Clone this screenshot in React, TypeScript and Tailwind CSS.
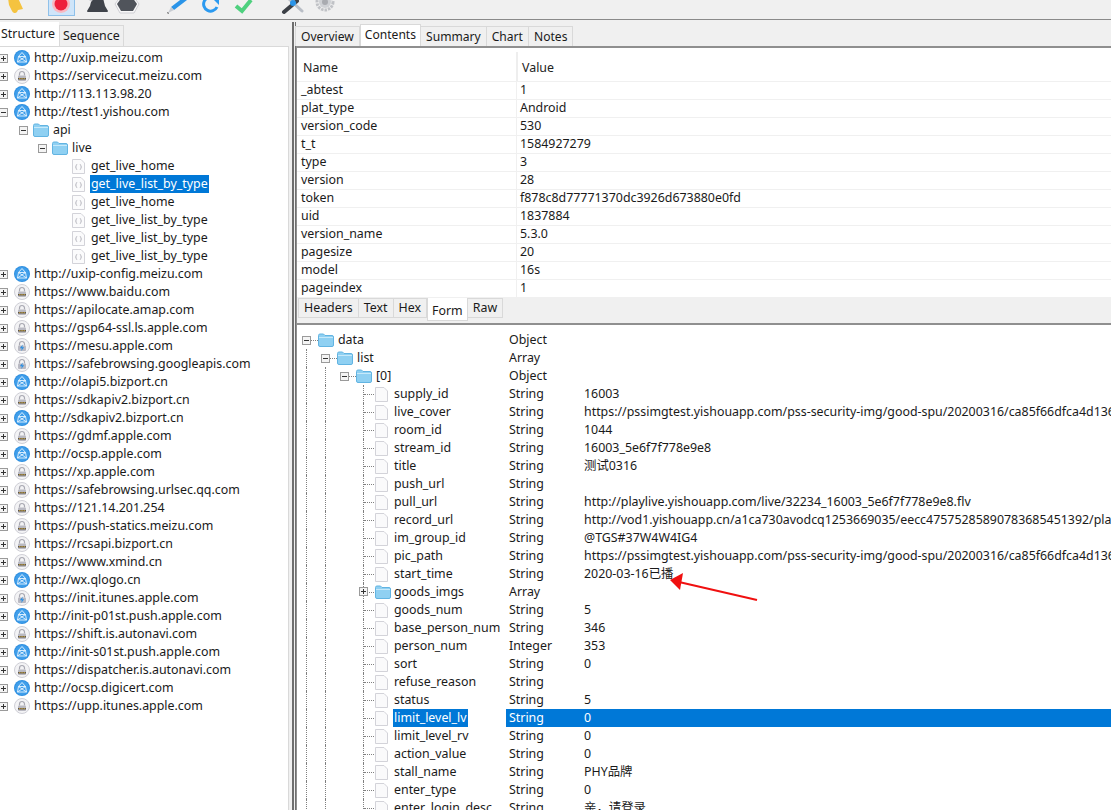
import type { ReactNode } from "react";

type HostKind = "globe" | "lock" | "bolt";

type Host = { url: string; kind: HostKind };

const hostsTop: Host[] = [
  { url: "http://uxip.meizu.com", kind: "globe" },
  { url: "https://servicecut.meizu.com", kind: "lock" },
  { url: "http://113.113.98.20", kind: "globe" },
];

const hostsBottom: Host[] = [
  { url: "http://uxip-config.meizu.com", kind: "globe" },
  { url: "https://www.baidu.com", kind: "lock" },
  { url: "https://apilocate.amap.com", kind: "lock" },
  { url: "https://gsp64-ssl.ls.apple.com", kind: "lock" },
  { url: "https://mesu.apple.com", kind: "bolt" },
  { url: "https://safebrowsing.googleapis.com", kind: "bolt" },
  { url: "http://olapi5.bizport.cn", kind: "globe" },
  { url: "https://sdkapiv2.bizport.cn", kind: "lock" },
  { url: "http://sdkapiv2.bizport.cn", kind: "globe" },
  { url: "https://gdmf.apple.com", kind: "lock" },
  { url: "http://ocsp.apple.com", kind: "globe" },
  { url: "https://xp.apple.com", kind: "lock" },
  { url: "https://safebrowsing.urlsec.qq.com", kind: "lock" },
  { url: "https://121.14.201.254", kind: "lock" },
  { url: "https://push-statics.meizu.com", kind: "lock" },
  { url: "https://rcsapi.bizport.cn", kind: "lock" },
  { url: "https://www.xmind.cn", kind: "lock" },
  { url: "http://wx.qlogo.cn", kind: "globe" },
  { url: "https://init.itunes.apple.com", kind: "bolt" },
  { url: "http://init-p01st.push.apple.com", kind: "globe" },
  { url: "https://shift.is.autonavi.com", kind: "lock" },
  { url: "http://init-s01st.push.apple.com", kind: "globe" },
  { url: "https://dispatcher.is.autonavi.com", kind: "lock" },
  { url: "http://ocsp.digicert.com", kind: "globe" },
  { url: "https://upp.itunes.apple.com", kind: "lock" },
];

const liveCalls = [
  "get_live_home",
  "get_live_list_by_type",
  "get_live_home",
  "get_live_list_by_type",
  "get_live_list_by_type",
  "get_live_list_by_type",
];

const contents = [
  ["_abtest", "1"],
  ["plat_type", "Android"],
  ["version_code", "530"],
  ["t_t", "1584927279"],
  ["type", "3"],
  ["version", "28"],
  ["token", "f878c8d77771370dc3926d673880e0fd"],
  ["uid", "1837884"],
  ["version_name", "5.3.0"],
  ["pagesize", "20"],
  ["model", "16s"],
  ["pageindex", "1"],
];

const formRows = [
  ["supply_id", "String", "16003"],
  ["live_cover", "String", "https://pssimgtest.yishouapp.com/pss-security-img/good-spu/20200316/ca85f66dfca4d136"],
  ["room_id", "String", "1044"],
  ["stream_id", "String", "16003_5e6f7f778e9e8"],
  ["title", "String", "测试0316"],
  ["push_url", "String", ""],
  ["pull_url", "String", "http://playlive.yishouapp.com/live/32234_16003_5e6f7f778e9e8.flv"],
  ["record_url", "String", "http://vod1.yishouapp.cn/a1ca730avodcq1253669035/eecc47575285890783685451392/play"],
  ["im_group_id", "String", "@TGS#37W4W4IG4"],
  ["pic_path", "String", "https://pssimgtest.yishouapp.com/pss-security-img/good-spu/20200316/ca85f66dfca4d136"],
  ["start_time", "String", "2020-03-16已播"],
  ["goods_imgs", "Array", ""],
  ["goods_num", "String", "5"],
  ["base_person_num", "String", "346"],
  ["person_num", "Integer", "353"],
  ["sort", "String", "0"],
  ["refuse_reason", "String", ""],
  ["status", "String", "5"],
  ["limit_level_lv", "String", "0"],
  ["limit_level_rv", "String", "0"],
  ["action_value", "String", "0"],
  ["stall_name", "String", "PHY品牌"],
  ["enter_type", "String", "0"],
  ["enter_login_desc", "String", "亲，请登录"],
];

function Expander({ open }: { open: boolean }) {
  return (
    <svg width="9" height="9" viewBox="0 0 9 9" className="shrink-0 bg-white">
      <rect x="0.5" y="0.5" width="8" height="8" fill="#f4f4f4" stroke="#9a9a9a" />
      <path d={open ? "M2 4.5h5" : "M2 4.5h5M4.5 2v5"} stroke="#333" />
    </svg>
  );
}

function Folder() {
  return (
    <svg width="16" height="14" viewBox="0 0 16 14" className="shrink-0">
      <path d="M0.5 2.5a1.5 1.5 0 0 1 1.5-1.5h3.5l1.5 1.5h7a1.5 1.5 0 0 1 1.5 1.5v8a1.5 1.5 0 0 1-1.5 1.5h-12a1.5 1.5 0 0 1-1.5-1.5z" fill="#8fd0f2" stroke="#62b4e2" />
      <path d="M1 4.5h14" stroke="#c6e9fa" />
    </svg>
  );
}

function JsonDoc() {
  return (
    <svg width="13" height="15" viewBox="0 0 13 15" className="shrink-0">
      <path d="M0.5 0.5h8.5l3.5 3.5v10.5h-12z" fill="#fbfbfc" stroke="#d3d3d9" />
      <path d="M5.2 5.5c-1 0-1 .5-1 1.2s0 1-.8 1.3c.8.3.8.6.8 1.3s0 1.2 1 1.2M7.8 5.5c1 0 1 .5 1 1.2s0 1 .8 1.3c-.8.3-.8.6-.8 1.3s0 1.2-1 1.2" fill="none" stroke="#9a9aa4" strokeWidth="0.7" />
    </svg>
  );
}

function Doc() {
  return (
    <svg width="13" height="15" viewBox="0 0 13 15" className="shrink-0">
      <path d="M0.5 0.5h8.5l3.5 3.5v10.5h-12z" fill="#fafafb" stroke="#d3d3d9" />
    </svg>
  );
}

function HostIcon({ kind }: { kind: HostKind }) {
  if (kind === "globe") {
    return (
      <svg width="16" height="16" viewBox="0 0 16 16" className="shrink-0">
        <circle cx="8" cy="8" r="8" fill="#2f8fe0" />
        <circle cx="8" cy="8" r="7" fill="#3f9eea" />
        <path d="M8 2.5l3.5 4 1 5.5h-9l1-5.5zM4.5 6.5h7M3.5 12l8-5.5M12.5 12l-8-5.5" fill="none" stroke="#e6f4ff" strokeWidth="0.9" />
      </svg>
    );
  }
  return (
    <svg width="16" height="16" viewBox="0 0 16 16" className="shrink-0">
      <circle cx="8" cy="8" r="7.5" fill="#f3f3f5" stroke="#cfcfd6" />
      <path d="M5.5 7.5V6a2.5 2.5 0 0 1 5 0v1.5" fill="none" stroke="#a9a9b2" strokeWidth="1.2" />
      <rect x="4" y="7.5" width="8" height="5.5" rx="1" fill="#b9b9c2" />
      {kind === "lock" ? (
        <path d="M4 10h8v1.5H4z" fill="#55504a" />
      ) : (
        <path d="M8.8 6.5L5.8 10.2h2l-.6 2.8 3-3.8h-2z" fill="#2a8fe4" />
      )}
      {kind === "lock" && <path d="M5 10.7h1.5M7.3 10.7h1.5M9.6 10.7h1.5" stroke="#e6b93c" strokeWidth="0.8" />}
    </svg>
  );
}

function LeftRow({ indent, toggle, icon, label, selected }: { indent: string; toggle?: ReactNode; icon: ReactNode; label: string; selected?: boolean }) {
  return (
    <div className={`flex h-[18px] items-center ${indent}`}>
      {toggle}
      {icon}
      <span className={`ml-[3px] flex h-[18px] items-center px-[1px] leading-[18px] ${selected ? "bg-[#0078d7] text-white" : ""}`}>{label}</span>
    </div>
  );
}

function LeftTree() {
  const hostRow = (h: Host, i: number, open = false) => (
    <div key={`${h.url}-${i}`} className="flex h-[18px] items-center">
      <Expander open={open} />
      <div className="ml-[6px] flex items-center">
        <HostIcon kind={h.kind} />
      </div>
      <span className="ml-[4px] leading-[18px]">{h.url}</span>
    </div>
  );
  return (
    <div className="h-full overflow-hidden pt-[2px]">
      <div className="-ml-[1px]">
        {hostsTop.map((h, i) => hostRow(h, i))}
        {hostRow({ url: "http://test1.yishou.com", kind: "globe" }, 9, true)}
      </div>
      <LeftRow
        indent="pl-[19px]"
        toggle={<span className="mr-[5px]"><Expander open /></span>}
        icon={<Folder />}
        label="api"
      />
      <LeftRow
        indent="pl-[38px]"
        toggle={<span className="mr-[5px]"><Expander open /></span>}
        icon={<Folder />}
        label="live"
      />
      {liveCalls.map((c, i) => (
        <LeftRow key={i} indent="pl-[72px]" icon={<span className="mr-[2px] block"><JsonDoc /></span>} label={c} selected={i === 1} />
      ))}
      <div className="-ml-[1px]">{hostsBottom.map((h, i) => hostRow(h, i))}</div>
    </div>
  );
}

function TabStrip({ tabs, active, bottom }: { tabs: string[]; active: string; bottom?: boolean }) {
  return (
    <div className={`flex ${bottom ? "h-[26px] items-start" : "h-[22px] items-end text-[12.1px]"}`}>
      {tabs.map((t) => (
        <div
          key={t}
          className={
            t === active
              ? `z-10 flex items-center border border-[#d9d9d9] bg-white px-[4px] ${bottom ? "h-[23px] border-t-0 pt-[4px]" : "h-[22px] border-b-0"}`
              : `-ml-[1px] flex h-[20px] items-center border border-[#d9d9d9] bg-[#f0f0f0] px-[5px] ${bottom ? "" : "border-b-0 pt-[1px]"}`
          }
        >
          {t}
        </div>
      ))}
    </div>
  );
}

function FormRow({ row, selected }: { row: string[]; selected: boolean }) {
  const [name, type, value] = row;
  const isArray = type === "Array";
  return (
    <div className="ml-[4px] flex h-[18px] items-center">
      <div className="flex h-full w-[19px] shrink-0 border-l border-dotted border-[#808080]" />
      <div className="flex h-full w-[38px] shrink-0 border-l border-dotted border-[#808080]" />
      <div className="relative flex h-full w-[12px] shrink-0 items-center border-l border-dotted border-[#808080]">
        <div className="w-[10px] border-t border-dotted border-[#808080]" />
        {isArray && (
          <div className="absolute -left-[5px] top-[4px]">
            <Expander open={false} />
          </div>
        )}
      </div>
      <div className="flex w-[18px] shrink-0 items-center">{isArray ? <Folder /> : <Doc />}</div>
      <span className="flex h-full w-[113px] shrink-0 items-center">
        <span className={`whitespace-nowrap px-[1px] ${selected ? "bg-[#0078d7] text-white" : ""}`}>{name}</span>
      </span>
      <div className={`flex h-full min-w-0 flex-1 items-center ${selected ? "bg-[#0078d7] text-white" : ""}`}>
        <span className="w-[78px] shrink-0 pl-[3px]">{type}</span>
        <span className="whitespace-nowrap">{value}</span>
      </div>
    </div>
  );
}

function FormTree() {
  return (
    <div className="h-full overflow-hidden pl-[5px] pt-[6px]">
      <div className="flex h-[18px] items-center">
        <Expander open />
        <span className="w-[7px] border-t border-dotted border-[#808080]" />
        <Folder />
        <span className="ml-[4px] w-[171px]">data</span>
        <span>Object</span>
      </div>
      <div className="ml-[4px] flex h-[18px] items-center">
        <div className="flex h-full w-[15px] shrink-0 border-l border-dotted border-[#808080]" />
        <Expander open />
        <span className="w-[7px] border-t border-dotted border-[#808080]" />
        <Folder />
        <span className="ml-[4px] w-[152px]">list</span>
        <span>Array</span>
      </div>
      <div className="ml-[4px] flex h-[18px] items-center">
        <div className="flex h-full w-[19px] shrink-0 border-l border-dotted border-[#808080]" />
        <div className="flex h-full w-[15px] shrink-0 border-l border-dotted border-[#808080]" />
        <Expander open />
        <span className="w-[7px] border-t border-dotted border-[#808080]" />
        <Folder />
        <span className="ml-[4px] w-[133px]">[0]</span>
        <span>Object</span>
      </div>
      {formRows.map((r) => (
        <FormRow key={r[0]} row={r} selected={r[0] === "limit_level_lv"} />
      ))}
    </div>
  );
}

function Toolbar() {
  return (
    <div className="flex h-[20px] shrink-0 items-start overflow-hidden border-b border-[#8a8a8a] bg-[#f0f0f0]">
      <svg width="340" height="20" viewBox="0 0 340 20" className="shrink-0">
        <path d="M8 -2h10l5 11 -5 1 -1 2a3 3 0 0 1-5-1l-3-6z" fill="#f5c33f" />
        <rect x="48.5" y="-3" width="26" height="18.5" fill="#cfe5f9" stroke="#8fc1ea" />
        <circle cx="61" cy="4" r="9" fill="#f8b9c2" />
        <circle cx="61" cy="4" r="6.5" fill="#ee1f3c" />
        <path d="M92 -2h11l2 8 3 5a1 1 0 0 1-1 1h-19a1 1 0 0 1-1-1l3-5z" fill="#3f434a" />
        <path d="M88 -2l4 3" stroke="#c8c8cc" strokeWidth="2" />
        <path d="M121 -4h12l6 8-5 9h-14l-5-9z" fill="#f8f8f8" stroke="#cfcfd4" />
        <path d="M122 -3h10l5 7-4 7h-12l-4-7z" fill="#50545b" />
        <path d="M184 -3l3 3-13 10-3-3z" fill="#2a94e8" />
        <path d="M171 7l3 3-6 3z" fill="#c8ccd2" />
        <path d="M167 12l2 1-1 1z" fill="#333" />
        <path d="M217 7a7 7 0 1 1-3-9" fill="none" stroke="#2b9af0" strokeWidth="3" />
        <path d="M211 -3h8v8z" fill="#2b9af0" />
        <path d="M236 6l6 5 9-11" fill="none" stroke="#4ed07e" strokeWidth="4" />
        <path d="M284 12l13-11" stroke="#3c4046" strokeWidth="4" strokeLinecap="round" />
        <path d="M288 -2l14 13" stroke="#b9bec6" strokeWidth="3" strokeLinecap="round" />
        <circle cx="293" cy="3" r="3" fill="#2a94e8" />
        <circle cx="325" cy="2" r="8" fill="none" stroke="#c0c2c6" strokeWidth="3" strokeDasharray="2.5 1" />
        <circle cx="325" cy="2" r="6" fill="#cfd1d5" />
        <circle cx="325" cy="2" r="3" fill="#a9abb0" />
      </svg>
    </div>
  );
}

export default function App() {
  return (
    <div className="relative flex h-[810px] w-[1111px] flex-col overflow-hidden bg-[#f0f0f0] font-['Noto_Sans','Noto_Sans_CJK_SC',sans-serif] text-[12.4px] text-[#1a1a1a]">
      <Toolbar />
      <div className="h-[2px] shrink-0 bg-[#f0f0f0]" />
      <div className="flex min-h-0 flex-1">
        <div className="flex w-[289px] shrink-0 flex-col">
          <div className="flex h-[24px] shrink-0 items-end">
            <div className="z-10 flex h-[24px] items-center bg-white pl-[1px] pr-[4px] pt-[1px]">Structure</div>
            <div className="flex h-[21px] items-center border border-b-0 border-[#d9d9d9] bg-[#f0f0f0] px-[3px] pt-[1px]">Sequence</div>
          </div>
          <div className="min-h-0 flex-1 border-r border-t border-[#d9d9d9] bg-white">
            <LeftTree />
          </div>
        </div>
        <div className="w-[3px] shrink-0" />
        <div className="w-[2px] shrink-0 bg-[#6e6e6e]" />
        <div className="w-[1px] shrink-0 bg-[#f0f0f0]" />
        <div className="w-[1px] shrink-0 bg-[#6e6e6e]" />
        <div className="flex min-w-0 flex-1 flex-col">
          <div className="pt-[2px]">
            <TabStrip tabs={["Overview", "Contents", "Summary", "Chart", "Notes"]} active="Contents" />
          </div>
          <div className="h-[251px] shrink-0 overflow-hidden border-l border-t-2 border-[#8f8f8f] bg-white">
            <div className="flex h-[34px] items-end border-b border-[#f0f0f0] text-[#222]">
              <span className="h-[29px] w-[219px] pl-[6px] pt-[7px]">Name</span>
              <span className="h-[29px] border-l-2 border-[#eeeeee] pl-[4px] pt-[7px]">Value</span>
            </div>
            {contents.map(([k, v]) => (
              <div key={k} className="flex h-[18px] items-center border-b border-[#f0f0f0]">
                <span className="w-[219px] shrink-0 pl-[4px]">{k}</span>
                <span className="flex h-full items-center border-l border-[#f0f0f0] pl-[3px]">{v}</span>
              </div>
            ))}
          </div>
          <div className="flex h-[26px] shrink-0 items-start border-l border-[#8f8f8f] pl-[2px] pt-[1px]">
            <TabStrip tabs={["Headers", "Text", "Hex", "Form", "Raw"]} active="Form" bottom />
          </div>
          <div className="min-h-0 flex-1 border-l border-t-2 border-[#8f8f8f] bg-white">
            <FormTree />
          </div>
        </div>
      </div>
      <svg width="100" height="40" viewBox="0 0 100 40" className="absolute left-[665px] top-[570px]">
        <path d="M92 30L14 12" stroke="#f01010" strokeWidth="2" />
        <path d="M5 10L18 3 L15 20z" fill="#f01010" />
      </svg>
    </div>
  );
}
